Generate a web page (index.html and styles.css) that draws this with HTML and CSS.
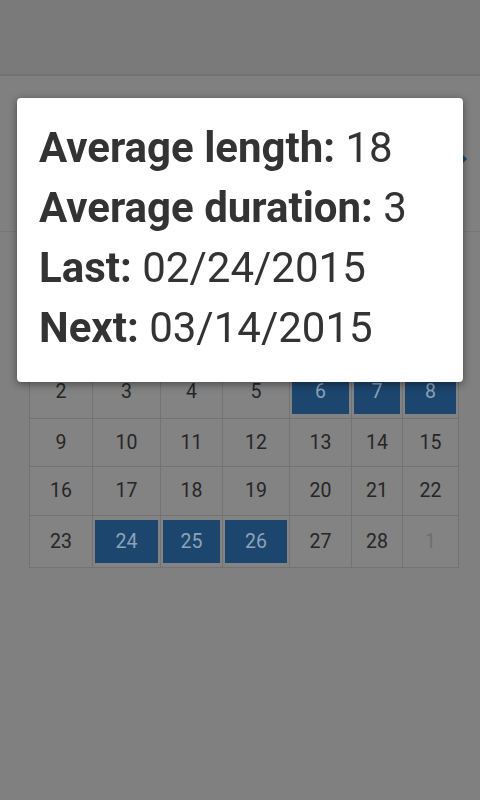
FILE: index.html
```html
<!DOCTYPE html>
<html>
<head>
<meta charset="utf-8">
<link rel="stylesheet" href="styles.css">
</head>
<body>
<div class="page">
  <div class="topbar"></div>
  <div class="nav">
    <svg class="chev" width="10" height="16" viewBox="0 0 10 16"><path d="M2 2 L8 8 L2 14" fill="none" stroke="#1f4a73" stroke-width="3"/></svg>
  </div>
  <div class="spacer"></div>
  <table class="cal">
    <colgroup>
      <col class="c1"><col class="c2"><col class="c3"><col class="c4"><col class="c5"><col class="c6"><col class="c7">
    </colgroup>
    <tr><td>2</td><td>3</td><td>4</td><td>5</td><td class="sel"><span>6</span></td><td class="sel"><span>7</span></td><td class="sel"><span>8</span></td></tr>
    <tr><td>9</td><td>10</td><td>11</td><td>12</td><td>13</td><td>14</td><td>15</td></tr>
    <tr><td>16</td><td>17</td><td>18</td><td>19</td><td>20</td><td>21</td><td>22</td></tr>
    <tr><td>23</td><td class="sel"><span>24</span></td><td class="sel"><span>25</span></td><td class="sel"><span>26</span></td><td>27</td><td>28</td><td class="other">1</td></tr>
  </table>
</div>
<div class="dialog">
  <p><b>Average length:</b> 18</p>
  <p><b>Average duration:</b> 3</p>
  <p><b>Last:</b> 02/24/2015</p>
  <p><b>Next:</b> 03/14/2015</p>
</div>
</body>
</html>
```
FILE: styles.css
```css
html, body {
  margin: 0;
  padding: 0;
  background: #808080;
  font-family: Roboto, "Noto Sans", sans-serif;
}
.page {
  width: 480px;
  height: 800px;
  overflow: hidden;
}
.topbar {
  height: 74px;
  background: #7a7a7a;
  border-bottom: 2px solid #727272;
}
.nav {
  height: 145px;
  padding-top: 10px;
  border-bottom: 1px solid #777777;
  display: flex;
  align-items: center;
  justify-content: flex-end;
  padding-right: 13px;
}
.chev {
  display: block;
}
.spacer {
  height: 133px;
}
.cal {
  margin-left: 29px;
  border-collapse: collapse;
  table-layout: fixed;
  width: 430px;
}
.c1 { width: 63px; }
.c2 { width: 68px; }
.c3 { width: 62px; }
.c4 { width: 67px; }
.c5 { width: 62px; }
.c6 { width: 51px; }
.c7 { width: 56px; }
.cal td {
  border: 1px solid #737373;
  background: #838383;
  height: 47.5px;
  padding: 0;
  text-align: center;
  font-size: 19.5px;
  color: #262626;
}
.cal td.sel {
  padding: 2px;
}
.cal td.sel span {
  display: flex;
  align-items: center;
  justify-content: center;
  height: 43.5px;
  background: #1c466d;
  color: #8ca3bb;
}
.cal td.other {
  color: #6f6f6f;
}
.dialog {
  position: fixed;
  left: 17px;
  top: 98px;
  width: 446px;
  height: 284px;
  box-sizing: border-box;
  padding: 20px 0 0 22px;
  background: #ffffff;
  border-radius: 4px;
  box-shadow: 0 2px 8px rgba(0,0,0,0.45);
  color: #333333;
}
.dialog p {
  margin: 0;
  font-size: 42px;
  line-height: 60px;
  white-space: nowrap;
}
.dialog b {
  font-weight: 700;
}
```
